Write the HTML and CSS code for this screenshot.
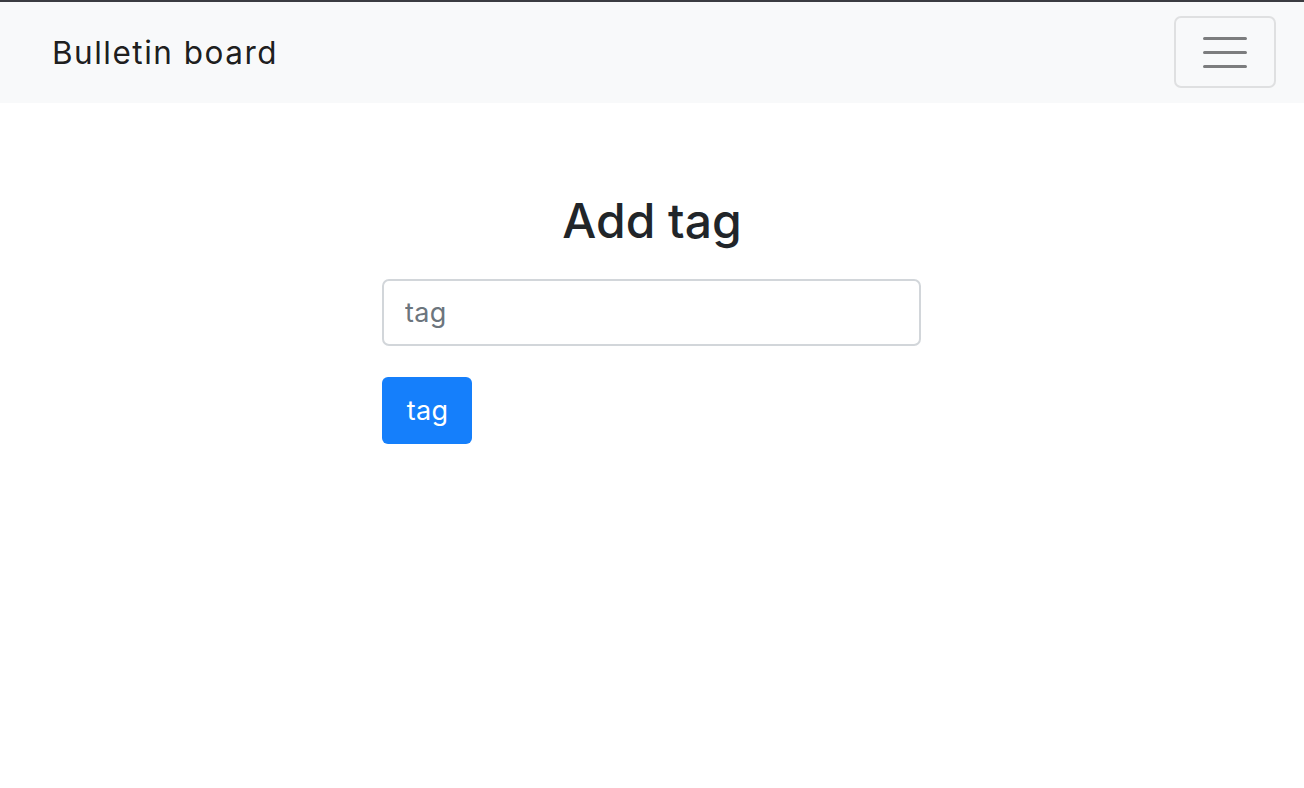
FILE: index.html
```html
<!DOCTYPE html>
<html lang="en">
<head>
<meta charset="utf-8">
<title>Bulletin board</title>
<link rel="stylesheet" href="styles.css">
</head>
<body>
<nav class="navbar">
  <a class="brand" href="#">Bulletin board</a>
  <button class="toggler" type="button" aria-label="Toggle navigation">
    <svg width="44" height="32" viewBox="0 0 44 32" aria-hidden="true">
      <path d="M1.5 2.5H42.5M1.5 16.5H42.5M1.5 30.5H42.5" stroke="#7c7d7e" stroke-width="3" stroke-linecap="round" fill="none"/>
    </svg>
  </button>
</nav>
<main class="main">
  <form class="form">
    <h2 class="title">Add tag</h2>
    <input class="field" type="text" placeholder="tag">
    <button class="btn" type="submit">tag</button>
  </form>
</main>
</body>
</html>
```
FILE: styles.css
```css
html, body {
  margin: 0;
  padding: 0;
  background: #ffffff;
  font-family: Inter, "Noto Sans", "Liberation Sans", sans-serif;
  color: #212529;
}

.navbar {
  border-top: 2px solid #3b3c41;
  background: #f8f9fa;
  height: 101px;
  display: flex;
  align-items: center;
  justify-content: space-between;
  padding: 0 28px 0 52px;
}

.brand {
  font-size: 31.5px;
  letter-spacing: 1.5px;
  color: rgba(0, 0, 0, 0.9);
  text-decoration: none;
  line-height: 1;
  margin-top: 1px;
}

.toggler {
  width: 102px;
  height: 72px;
  box-sizing: border-box;
  border: 2px solid #dfe0e1;
  border-radius: 7px;
  background: transparent;
  display: flex;
  align-items: center;
  justify-content: center;
  padding: 0;
  margin-top: -1px;
}

.toggler svg {
  display: block;
}

.main {
  display: flex;
  justify-content: center;
  padding-top: 89px;
}

.form {
  width: 540px;
  display: flex;
  flex-direction: column;
  align-items: flex-start;
}

.title {
  align-self: center;
  margin: 0 0 29px;
  font-size: 48px;
  font-weight: 500;
  line-height: 58px;
  color: #212529;
}

.field {
  width: 539px;
  height: 67px;
  box-sizing: border-box;
  border: 2px solid #d2d6da;
  border-radius: 7px;
  padding: 0 21px;
  font-family: inherit;
  font-size: 27px;
  letter-spacing: 0.3px;
  color: #495057;
  outline: none;
}

.field::placeholder {
  color: #6c757d;
  opacity: 1;
}

.btn {
  margin-top: 31px;
  width: 90px;
  height: 67px;
  border: none;
  border-radius: 6px;
  background: #157ffb;
  color: #ffffff;
  font-family: inherit;
  font-size: 27px;
  letter-spacing: 0.3px;
  padding: 0 0 0 1px;
}
```
